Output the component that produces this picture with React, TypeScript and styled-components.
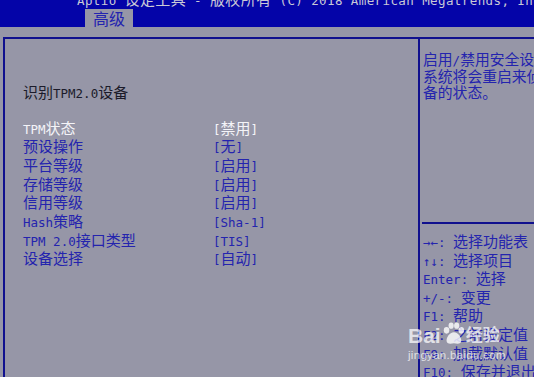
import React from 'react';
import styled, { createGlobalStyle } from 'styled-components';

const GlobalStyle = createGlobalStyle`
  html, body {
    margin: 0;
    padding: 0;
    background: #9696a7;
  }
  body {
    font-family: "Noto Sans CJK SC", sans-serif;
  }
`;

const Screen = styled.div`
  position: relative;
  width: 534px;
  height: 377px;
  overflow: hidden;
  background: #9696a7;
  display: flex;
  flex-direction: column;
`;

const TopBar = styled.div`
  height: 27px;
  flex: 0 0 27px;
  background: #0404a8;
  display: flex;
  flex-direction: column;
  overflow: hidden;
`;

const Title = styled.div`
  margin-top: -9px;
  margin-left: 77px;
  height: 16px;
  line-height: 16px;
  font-size: 15px;
  letter-spacing: 0.4px;
  color: #c9c9d6;
  white-space: nowrap;
`;

const Tab = styled.div`
  margin: 2px 0 0 85px;
  width: 48px;
  height: 18px;
  background: #9696a7;
  color: #2323b0;
  font-size: 16px;
  line-height: 18px;
  text-align: center;
`;

const Body = styled.div`
  flex: 1;
  padding: 10px 0 0 3px;
  display: flex;
  min-height: 0;
`;

const Frame = styled.div`
  flex: 1;
  border-top: 2px solid #10108e;
  border-left: 2px solid #10108e;
  display: grid;
  grid-template-columns: 413px 1fr;
  min-width: 0;
`;

const LeftPanel = styled.div`
  padding: 43px 0 0 18px;
  font-size: 15px;
`;

const Intro = styled.div`
  height: 19px;
  line-height: 19px;
  color: #1b1b2a;
  margin-bottom: 17.5px;
`;

const Row = styled.div<{ $selected?: boolean }>`
  display: grid;
  grid-template-columns: 190px 1fr;
  height: 18.7px;
  line-height: 18.7px;
  color: ${p => (p.$selected ? '#f4f4f8' : '#2424ae')};
  white-space: nowrap;
`;

const RightPanel = styled.div`
  border-left: 2px solid #10108e;
  display: flex;
  flex-direction: column;
  min-width: 0;
  overflow: hidden;
`;

const HelpTop = styled.div`
  box-sizing: border-box;
  flex: 0 0 183px;
  padding: 12px 0 0 3px;
  font-size: 14.8px;
  color: #2424ae;
`;

const Line = styled.div<{ $h: number }>`
  height: ${p => p.$h}px;
  line-height: ${p => p.$h}px;
  white-space: nowrap;
`;

const Divider = styled.div`
  flex: 0 0 2px;
  margin-left: 2px;
  background: #10108e;
`;

const KeyHelp = styled.div`
  flex-shrink: 0;
  padding: 8px 0 0 3px;
  font-size: 15px;
  color: #2424ae;
`;

const Lat = styled.span`
  font-family: "DejaVu Sans Mono", monospace;
  font-size: 12.5px;
  white-space: pre;
`;

const Watermark = styled.div`
  position: absolute;
  left: 408px;
  top: 321px;
  color: rgba(255, 255, 255, 0.72);
  pointer-events: none;
`;

const WmLogo = styled.div`
  display: flex;
  align-items: flex-end;
  font-family: "Liberation Sans", Arial, sans-serif;
  font-weight: bold;
  font-size: 21px;
  line-height: 22px;
`;

const WmCn = styled.span`
  font-family: "Noto Sans CJK SC", sans-serif;
  font-size: 17px;
  line-height: 26px;
  margin-left: 1px;
`;

const WmUrl = styled.div`
  font-family: "Liberation Sans", Arial, sans-serif;
  font-size: 11.5px;
  line-height: 12px;
  margin-top: 2px;
  letter-spacing: 0.3px;
`;

const T: React.FC<{ text: string }> = ({ text }) => (
  <>
    {text
      .split(/([\x20-\x7e\u2190-\u2193]+)/)
      .filter(Boolean)
      .map((part, i) =>
        /^[\x20-\x7e\u2190-\u2193]+$/.test(part) ? <Lat key={i}>{part}</Lat> : <span key={i}>{part}</span>
      )}
  </>
);

const rows = [
  ['TPM状态', '[禁用]'],
  ['预设操作', '[无]'],
  ['平台等级', '[启用]'],
  ['存储等级', '[启用]'],
  ['信用等级', '[启用]'],
  ['Hash策略', '[Sha-1]'],
  ['TPM 2.0接口类型', '[TIS]'],
  ['设备选择', '[自动]'],
];

const help = ['启用/禁用安全设备。若修改设定，', '系统将会重启来侦测设', '备的状态。'];

const keys = [
  '→←: 选择功能表',
  '↑↓: 选择项目',
  'Enter: 选择',
  '+/-: 变更',
  'F1: 帮助',
  'F2: 之前设定值',
  'F9: 加载默认值',
  'F10: 保存并退出',
];

const Paw = () => (
  <svg width="24" height="26" viewBox="0 0 26 26">
    <g fill="rgba(255,255,255,0.8)">
      <ellipse cx="6" cy="9" rx="3" ry="3.6" />
      <ellipse cx="11" cy="4" rx="2.8" ry="3.4" />
      <ellipse cx="17" cy="4" rx="2.8" ry="3.4" />
      <ellipse cx="22" cy="9" rx="3" ry="3.6" />
      <path d="M14 11 C9 11 6 17 6 20 C6 24 10 24 14 23 C18 24 22 24 22 20 C22 17 19 11 14 11 Z" />
    </g>
  </svg>
);

export default function App() {
  return (
    <>
      <GlobalStyle />
      <Screen>
        <TopBar>
          <Title>
            <T text="Aptio 设定工具 - 版权所有 (C) 2018 American Megatrends, Inc." />
          </Title>
          <Tab>高级</Tab>
        </TopBar>
        <Body>
          <Frame>
            <LeftPanel>
              <Intro>
                <T text="识别TPM2.0设备" />
              </Intro>
              {rows.map(([label, value], i) => (
                <Row key={label} $selected={i === 0}>
                  <span>
                    <T text={label} />
                  </span>
                  <span>
                    <T text={value} />
                  </span>
                </Row>
              ))}
            </LeftPanel>
            <RightPanel>
              <HelpTop>
                {help.map(h => (
                  <Line key={h} $h={16.6}>
                    <T text={h} />
                  </Line>
                ))}
              </HelpTop>
              <Divider />
              <KeyHelp>
                {keys.map(k => (
                  <Line key={k} $h={18.6}>
                    <T text={k} />
                  </Line>
                ))}
              </KeyHelp>
            </RightPanel>
          </Frame>
        </Body>
        <Watermark>
          <WmLogo>
            Bai
            <Paw />
            <WmCn>经验</WmCn>
          </WmLogo>
          <WmUrl>jingyan.baidu.com</WmUrl>
        </Watermark>
      </Screen>
    </>
  );
}
